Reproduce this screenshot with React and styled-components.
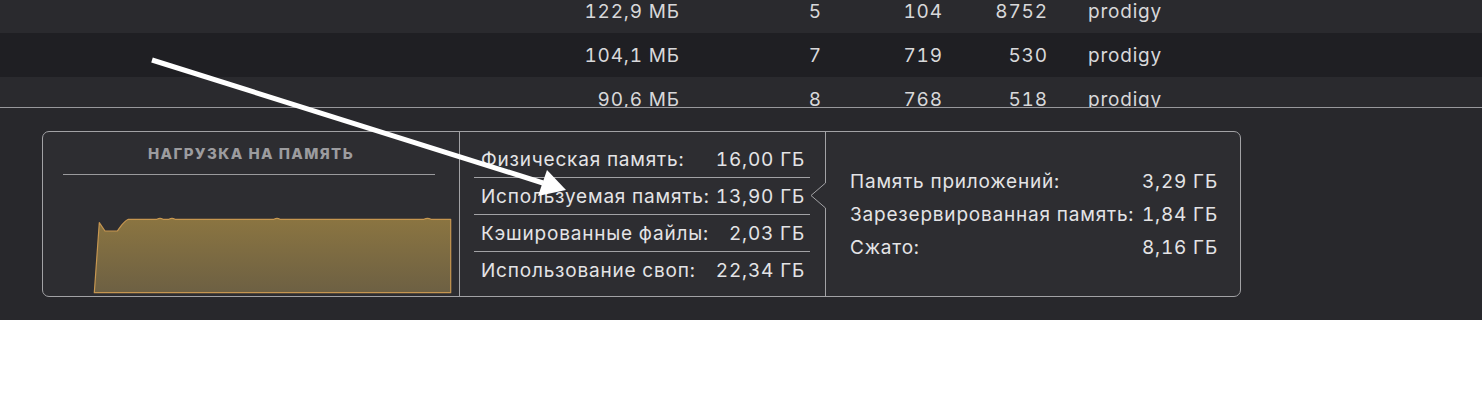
import React from "react";
import styled, { createGlobalStyle } from "styled-components";

const GlobalStyle = createGlobalStyle`
  html, body { margin: 0; padding: 0; background: #ffffff; }
  body { font-family: Inter, "Noto Sans", sans-serif; }
`;

const Window = styled.div`
  position: relative;
  width: 1482px;
  background: #28282c;
`;

const TableViewport = styled.div`
  height: 107px;
  overflow: hidden;
`;

const Rows = styled.div`
  margin-top: -11px;
`;

const Row = styled.div`
  display: grid;
  grid-template-columns: 679px 142px 121px 105px 1fr;
  height: 44px;
  align-items: center;
  background: ${(p) => (p.$alt ? "#1f1f23" : "#2a2a2e")};
  color: #d8d8da;
  font-size: 19px;
  letter-spacing: 0.8px;
  font-variant-numeric: tabular-nums;
`;

const Cell = styled.div`
  text-align: ${(p) => (p.$left ? "left" : "right")};
  padding-left: ${(p) => (p.$left ? "41px" : "0")};
  margin-right: ${(p) => (p.$left ? "0" : "-0.8px")};
  white-space: nowrap;
`;

const Rule = styled.div`
  height: 1px;
  background: #98989c;
`;

const BottomPanel = styled.div`
  height: 212px;
  box-sizing: border-box;
  padding: 23px 42px;
  background: #28282c;
`;

const Card = styled.div`
  display: flex;
  width: 1199px;
  height: 166px;
  box-sizing: border-box;
  border: 1px solid #a2a2a5;
  border-radius: 7px;
  background: #2d2d31;
  overflow: hidden;
`;

const PressureSection = styled.div`
  width: 416px;
  border-right: 1px solid #a2a2a5;
  display: flex;
  flex-direction: column;
`;

const PressureTitle = styled.div`
  margin-top: 12px;
  height: 20px;
  line-height: 20px;
  text-align: center;
  font-size: 15px;
  font-weight: 800;
  letter-spacing: 1.4px;
  color: #9c9c9f;
`;

const TitleRule = styled.div`
  margin: 10px 24px 0 20px;
  height: 1px;
  background: #9a9a9d;
`;

const Chart = styled.svg`
  display: block;
  margin-top: 40px;
`;

const StatsSection = styled.div`
  width: 350px;
  box-sizing: border-box;
  padding: 9px 0 0 14px;
  display: flex;
  flex-direction: column;
`;

const StatRow = styled.div`
  display: flex;
  justify-content: space-between;
  align-items: center;
  height: 36px;
  padding: 0 5px 0 7px;
  border-bottom: ${(p) => (p.$last ? "none" : "1px solid #a2a2a5")};
  color: #e4e4e6;
  font-size: 19px;
  letter-spacing: 0.8px;
  font-variant-numeric: tabular-nums;
  white-space: nowrap;
`;

const Divider = styled.div`
  width: 16px;
  display: flex;
  flex-direction: column;
`;

const DividerLine = styled.div`
  height: ${(p) => (p.$h ? `${p.$h}px` : "auto")};
  flex: ${(p) => (p.$h ? "none" : "1")};
  border-right: 1px solid #a2a2a5;
`;

const Notch = styled.svg`
  display: block;
`;

const BreakdownSection = styled.div`
  flex: 1;
  display: flex;
  flex-direction: column;
  justify-content: center;
  padding: 0 22px 0 24px;
`;

const BreakdownRow = styled.div`
  display: flex;
  justify-content: space-between;
  align-items: center;
  height: 33px;
  color: #e4e4e6;
  font-size: 19px;
  letter-spacing: 0.8px;
  font-variant-numeric: tabular-nums;
  white-space: nowrap;
`;

const ArrowLayer = styled.svg`
  position: absolute;
  left: 0;
  top: 0;
  pointer-events: none;
`;

const tableRows = [
  ["122,9 МБ", "5", "104", "8752", "prodigy"],
  ["104,1 МБ", "7", "719", "530", "prodigy"],
  ["90,6 МБ", "8", "768", "518", "prodigy"],
];

const stats = [
  ["Физическая память:", "16,00 ГБ"],
  ["Используемая память:", "13,90 ГБ"],
  ["Кэшированные файлы:", "2,03 ГБ"],
  ["Использование своп:", "22,34 ГБ"],
];

const breakdown = [
  ["Память приложений:", "3,29 ГБ"],
  ["Зарезервированная память:", "1,84 ГБ"],
  ["Сжато:", "8,16 ГБ"],
];

export default function App() {
  return (
    <>
      <GlobalStyle />
      <Window>
        <TableViewport>
          <Rows>
            {tableRows.map((r, i) => (
              <Row key={i} $alt={i === 1}>
                <Cell>{r[0]}</Cell>
                <Cell>{r[1]}</Cell>
                <Cell>{r[2]}</Cell>
                <Cell>{r[3]}</Cell>
                <Cell $left>{r[4]}</Cell>
              </Row>
            ))}
          </Rows>
        </TableViewport>
        <Rule />
        <BottomPanel>
          <Card>
            <PressureSection>
              <PressureTitle>НАГРУЗКА НА ПАМЯТЬ</PressureTitle>
              <TitleRule />
              <Chart width="416" height="80" viewBox="0 0 416 80">
                <defs>
                  <linearGradient id="mp" x1="0" y1="0" x2="0" y2="1">
                    <stop offset="0" stopColor="#8b7541" />
                    <stop offset="1" stopColor="#6d6043" />
                  </linearGradient>
                </defs>
                <path
                  d="M51.3,77.7 L56.3,7.7 L62,16 L74.3,16 C78,11 81,6 85.3,4.3 L114,4.3 Q117,2.6 120,4.3 L126,4.3 Q129,2.6 132,4.3 L231,4.3 Q234,2.6 237,4.3 L381,4.3 Q384.5,2.6 388,4.3 L407.7,4.3 L407.7,77.7 Z"
                  fill="url(#mp)"
                  stroke="#c69650"
                  strokeWidth="1.2"
                  strokeLinejoin="round"
                />
              </Chart>
            </PressureSection>
            <StatsSection>
              {stats.map((s, i) => (
                <StatRow key={i} $last={i === stats.length - 1}>
                  <span>{s[0]}</span>
                  <span>{s[1]}</span>
                </StatRow>
              ))}
            </StatsSection>
            <Divider>
              <DividerLine $h={51} />
              <Notch width="16" height="25" viewBox="0 0 16 25">
                <path d="M15.5,0 L1,12.5 L15.5,25" fill="none" stroke="#a2a2a5" strokeWidth="1" />
              </Notch>
              <DividerLine />
            </Divider>
            <BreakdownSection>
              {breakdown.map((b, i) => (
                <BreakdownRow key={i}>
                  <span>{b[0]}</span>
                  <span>{b[1]}</span>
                </BreakdownRow>
              ))}
            </BreakdownSection>
          </Card>
        </BottomPanel>
        <ArrowLayer width="1482" height="320" viewBox="0 0 1482 320">
          <line x1="152" y1="60" x2="543" y2="183" stroke="#ffffff" strokeWidth="5" />
          <polygon points="566,190 538,196 547,170" fill="#ffffff" />
        </ArrowLayer>
      </Window>
    </>
  );
}
